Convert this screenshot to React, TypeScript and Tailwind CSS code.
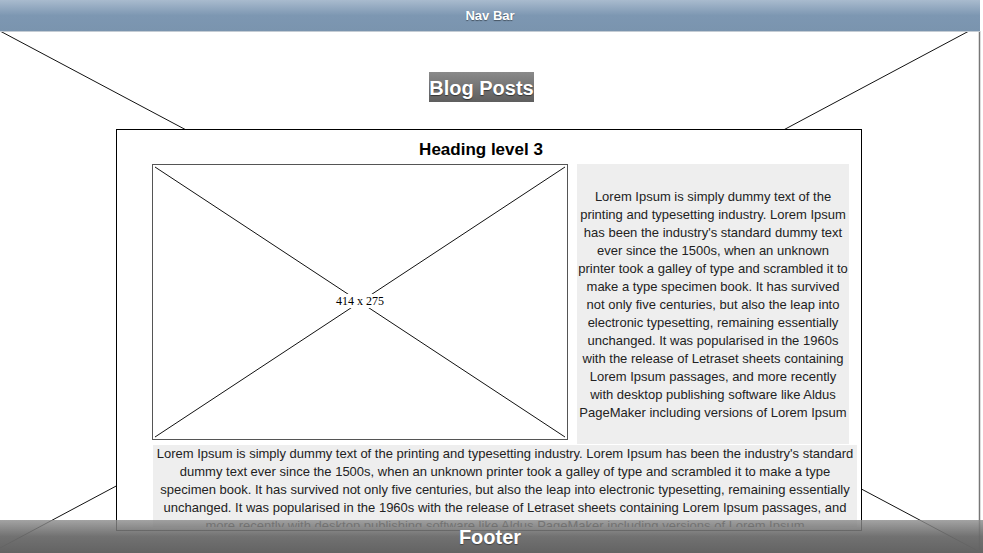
import React from 'react';

const lorem =
  "Lorem Ipsum is simply dummy text of the printing and typesetting industry. Lorem Ipsum has been the industry's standard dummy text ever since the 1500s, when an unknown printer took a galley of type and scrambled it to make a type specimen book. It has survived not only five centuries, but also the leap into electronic typesetting, remaining essentially unchanged. It was popularised in the 1960s with the release of Letraset sheets containing Lorem Ipsum passages, and more recently with desktop publishing software like Aldus PageMaker including versions of Lorem Ipsum";

const ImagePlaceholder = () => (
  <div className="relative h-[276px] w-[416px] shrink-0 border border-[#555] bg-white">
    <svg className="absolute inset-0 h-full w-full" viewBox="0 0 414 274" preserveAspectRatio="none">
      <line x1="2" y1="2" x2="412" y2="272" stroke="#111" strokeWidth="1" />
      <line x1="412" y1="2" x2="2" y2="272" stroke="#111" strokeWidth="1" />
    </svg>
    <div className="absolute inset-0 flex items-center justify-center pb-[2px]">
      <span className="bg-white px-[1px] font-['Liberation_Serif'] text-[12px] leading-[14px] text-black">414 x 275</span>
    </div>
  </div>
);

export default function App() {
  return (
    <div className="relative h-[553px] w-[983px] overflow-hidden bg-white font-['Liberation_Sans',sans-serif]">
      {/* wireframe background cross */}
      <svg className="absolute left-0 top-0 h-[553px] w-[983px]" viewBox="0 0 983 553">
        <line x1="0" y1="31" x2="978" y2="551" stroke="#111" strokeWidth="1" />
        <line x1="969" y1="31" x2="0" y2="548" stroke="#111" strokeWidth="1" />
        <line x1="979.5" y1="31" x2="979.5" y2="553" stroke="#777" strokeWidth="1.5" />
      </svg>

      {/* Nav bar */}
      <nav className="relative flex h-[32px] w-[980px] items-center justify-center border-b border-[#c4ccd4] bg-gradient-to-b from-[#a9bbce] via-[#7d97b2] to-[#7a94ae]">
        <span className="text-[13px] font-bold text-white [text-shadow:0_1px_1px_rgba(0,0,0,0.45)]">Nav Bar</span>
      </nav>

      {/* Page title */}
      <div className="relative ml-[429px] mt-[40px] flex h-[30px] w-[105px] items-center justify-center bg-gradient-to-b from-[#8a8a8a] to-[#5e5e5e]">
        <span className="mt-[2px] text-[20px] font-bold text-white [text-shadow:0_1px_1px_rgba(0,0,0,0.5)]">Blog Posts</span>
      </div>

      {/* Main box */}
      <section className="relative ml-[116px] mt-[27px] h-[402px] w-[746px] overflow-hidden border border-black bg-white">
        <h3 className="ml-[301px] mt-[10px] h-[24px] w-[126px] text-center text-[17px] font-bold leading-[20px] text-black">
          Heading level 3
        </h3>
        <div className="ml-[35px] flex gap-[9px]">
          <ImagePlaceholder />
          <div className="flex h-[280px] w-[272px] items-center justify-center bg-[#eeeeee] pt-[2px]">
            <p className="text-center text-[13px] leading-[18px] text-[#222]">{lorem}</p>
          </div>
        </div>
        <div className="ml-[36px] mt-[1px] h-[82px] w-[704px] overflow-hidden bg-[#eeeeee] px-[3px]">
          <p className="text-center text-[13px] leading-[18px] text-[#222]">{lorem}</p>
        </div>
      </section>

      {/* Footer */}
      <footer className="absolute bottom-0 left-0 flex h-[33px] w-[983px] items-center justify-center bg-gradient-to-b from-[#8c8c8c]/80 via-[#6a6a6a]/95 to-[#636363]">
        <span className="mr-[3px] text-[20px] font-bold text-white [text-shadow:0_1px_1px_rgba(0,0,0,0.4)]">Footer</span>
      </footer>
    </div>
  );
}
